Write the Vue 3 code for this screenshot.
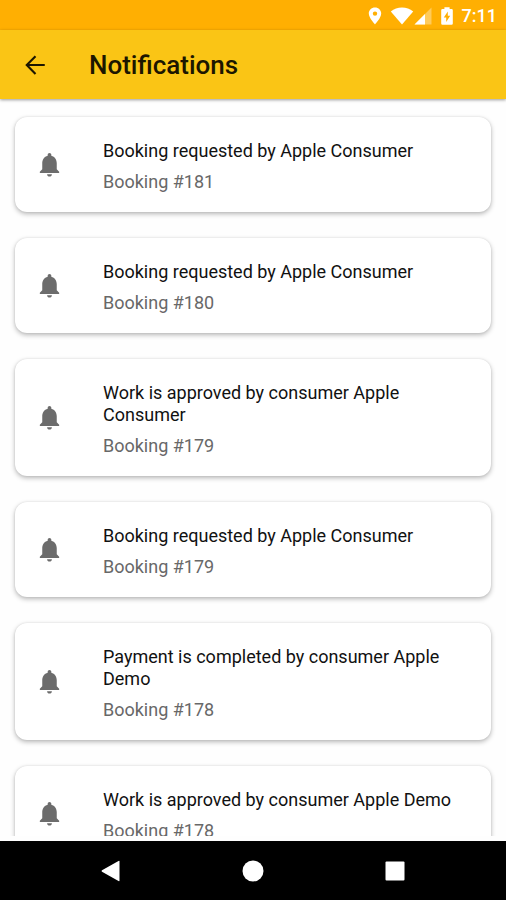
<script setup>
const notifications = [
  { id: 1, title: 'Booking requested by Apple Consumer', booking: 181 },
  { id: 2, title: 'Booking requested by Apple Consumer', booking: 180 },
  { id: 3, title: 'Work is approved by consumer Apple Consumer', booking: 179 },
  { id: 4, title: 'Booking requested by Apple Consumer', booking: 179 },
  { id: 5, title: 'Payment is completed by consumer Apple Demo', booking: 178 },
  { id: 6, title: 'Work is approved by consumer Apple Demo', booking: 178 },
]
</script>

<template>
  <div class="screen">
    <div class="status">
      <svg class="pin" viewBox="0 0 14 18" aria-hidden="true">
        <path fill-rule="evenodd" d="M7 0.5C3.4 0.5 0.8 3.2 0.8 6.6 0.8 11 7 17.5 7 17.5S13.2 11 13.2 6.6C13.2 3.2 10.6 0.5 7 0.5ZM7 4.4A2.2 2.2 0 1 1 7 8.8 2.2 2.2 0 0 1 7 4.4Z" />
      </svg>
      <svg class="wifi" viewBox="0 0 24 18" aria-hidden="true">
        <path d="M12 17.5 0.8 4.4C4 1.8 7.8 0.5 12 0.5S20 1.8 23.2 4.4Z" />
      </svg>
      <svg class="signal" viewBox="0 0 18 18" aria-hidden="true">
        <path opacity=".35" d="M0.5 17.5 17.5 0.5V17.5Z" />
        <path d="M0.5 17.5 11 7V17.5Z" />
      </svg>
      <svg class="battery" viewBox="0 0 14 18" aria-hidden="true">
        <path fill-rule="evenodd" d="M4.4 0.3H9.6V2H11.6Q12.8 2 12.8 3.2V16.5Q12.8 17.7 11.6 17.7H2.4Q1.2 17.7 1.2 16.5V3.2Q1.2 2 2.4 2H4.4ZM7.8 4.5 3.8 10.6H6.2V15L10.2 8.8H7.8Z" />
      </svg>
      <time class="clock">7:11</time>
    </div>

    <header class="bar">
      <button class="back" type="button" aria-label="Back">
        <svg viewBox="0 0 24 24" aria-hidden="true">
          <path d="M19.8 11.2H7.4l5.6-5.7L11.8 4.3l-7.6 7.7 7.6 7.7L13 18.500l-5.600-5.700H19.800z" />
        </svg>
      </button>
      <h1>Notifications</h1>
    </header>

    <main class="list">
      <article v-for="item in notifications" :key="item.id" class="card">
        <svg class="bell" viewBox="0 0 24 24" aria-hidden="true">
          <path d="M12 22c1.1 0 2-.9 2-2h-4c0 1.1.9 2 2 2zm6-6v-5c0-3.1-1.6-5.6-4.5-6.3V4c0-.8-.7-1.5-1.5-1.5s-1.5.7-1.5 1.500v.7C7.600 5.400 6 7.900 6 11v5l-2 2v1h16v-1z" />
        </svg>
        <div class="text">
          <h2>{{ item.title }}</h2>
          <p>Booking #{{ item.booking }}</p>
        </div>
      </article>
    </main>

    <nav class="system">
      <button type="button" aria-label="System back">
        <svg viewBox="0 0 24 24" aria-hidden="true"><path d="M20.500 2.500V21.500Q20.500 22.500 19.500 22L3 12.800Q2 12 3 11.200L19.500 2Q20.500 1.500 20.500 2.500Z" /></svg>
      </button>
      <button type="button" aria-label="Home">
        <svg viewBox="0 0 24 24" aria-hidden="true"><circle cx="12" cy="12" r="10.500" /></svg>
      </button>
      <button type="button" aria-label="Recent apps">
        <svg viewBox="0 0 24 24" aria-hidden="true"><rect x="2.500" y="2.500" width="19" height="19" rx="1" /></svg>
      </button>
    </nav>
  </div>
</template>

<style>
body {
  margin: 0;
}
</style>

<style scoped>
.screen {
  display: flex;
  flex-direction: column;
  height: 100vh;
  overflow: hidden;
  background: #fefefe;
  font-family: Roboto, "Liberation Sans", sans-serif;
}

.status {
  display: flex;
  flex: none;
  align-items: center;
  justify-content: flex-end;
  box-sizing: border-box;
  height: 30px;
  padding: 2px 9px 0 0;
  background: #ffaf02;
  color: #fff;
}

.status svg {
  height: 18px;
  fill: currentColor;
}

.pin {
  width: 14px;
  margin-right: 8px;
}

.wifi {
  width: 24px;
}

.signal {
  width: 18px;
  margin-right: 8px;
}

.battery {
  width: 14px;
  margin-right: 8px;
}

.clock {
  font-size: 18px;
  font-weight: 500;
  line-height: 22px;
}

.bar {
  position: relative;
  display: flex;
  flex: none;
  align-items: center;
  gap: 39px;
  height: 69px;
  padding: 0 20px;
  background: #fac515;
  box-shadow: 0 1px 3px rgba(0, 0, 0, 0.4);
}

.back {
  display: flex;
  padding: 0;
  border: 0;
  background: none;
  cursor: pointer;
}

.back svg {
  width: 30px;
  height: 30px;
  fill: #1c1600;
}

h1 {
  margin: 0;
  color: #1c1600;
  font-size: 26px;
  font-weight: 500;
  line-height: 32px;
}

.list {
  display: flex;
  flex: 1;
  flex-direction: column;
  gap: 26px;
  min-height: 0;
  margin-bottom: 5px;
  padding: 18px 15px 0;
  overflow: hidden;
}

.card {
  display: flex;
  flex: none;
  align-items: center;
  gap: 39px;
  padding: 0 24px 0 20px;
  border-radius: 12px;
  background: #fff;
  box-shadow: 0 2px 5px rgba(0, 0, 0, 0.28), 0 0 2px rgba(0, 0, 0, 0.1);
}

.bell {
  flex: none;
  width: 29px;
  height: 29px;
  fill: #6c6c6c;
}

.text {
  flex: 1;
  padding: 23px 0 19px;
}

h2,
p {
  margin: 0;
  font-size: 18px;
  font-weight: 400;
  line-height: 22px;
}

h2 {
  color: #111;
}

p {
  margin-top: 9px;
  color: #686868;
}

.system {
  display: flex;
  flex: none;
  align-items: center;
  justify-content: center;
  gap: 118px;
  height: 59px;
  background: #000;
}

.system button {
  display: flex;
  padding: 0;
  border: 0;
  background: none;
  cursor: pointer;
}

.system svg {
  width: 24px;
  height: 24px;
  fill: #fff;
}
</style>
